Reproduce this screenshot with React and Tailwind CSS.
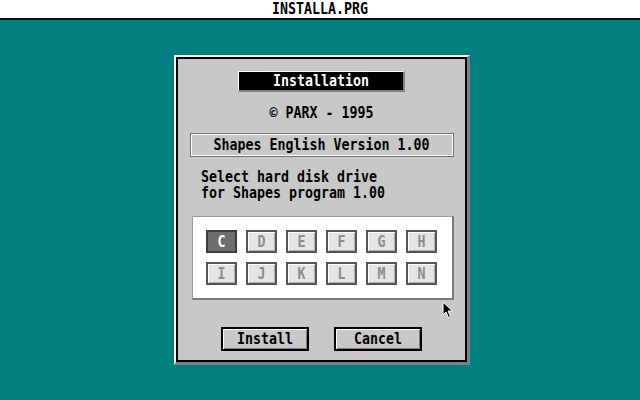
import React from 'react';

// GEM-style installer dialog on a teal desktop
const mono = { fontFamily: '"DejaVu Sans Mono", "Liberation Mono", monospace' };

const drives = [
  ['C', 'D', 'E', 'F', 'G', 'H'],
  ['I', 'J', 'K', 'L', 'M', 'N'],
];

const DriveButton = ({ letter, active }) => (
  <div
    className={
      active
        ? 'w-[31px] h-[23px] flex items-center justify-center border-2 border-[#3c3c3c] bg-[#6e6e6e] text-white'
        : 'w-[31px] h-[23px] flex items-center justify-center border-2 border-[#555] bg-[#e4e4e4] shadow-[inset_1px_1px_0_#fff,inset_-1px_-1px_0_#b0b0b0] text-[#8c8c8c]'
    }
  >
    <span className="text-[13.3px] leading-none font-bold scale-y-[1.2]">{letter}</span>
  </div>
);

const Button = ({ children }) => (
  <div className="w-[88px] h-[24px] flex items-center justify-center border-2 border-black bg-[#c8c8c8] shadow-[inset_1px_1px_0_#fff,inset_-1px_-1px_0_#808080]">
    <span className="text-[13.3px] leading-none font-bold text-black scale-y-[1.2]">{children}</span>
  </div>
);

const Cursor = () => (
  <svg className="absolute left-[442px] top-[301px]" width="12" height="18" viewBox="0 0 12 18">
    <path d="M1 1 L1 14 L4 11 L6.5 16.5 L8.5 15.5 L6 10 L10.5 10 Z" fill="#000" stroke="#fff" strokeWidth="1" />
  </svg>
);

export default function App() {
  return (
    <div className="relative w-[640px] h-[400px] flex flex-col bg-[#008080] overflow-hidden" style={mono}>
      {/* window title bar */}
      <div className="h-[20px] bg-white border-b-2 border-black flex items-center justify-center shrink-0">
        <span className="text-[13.3px] leading-none font-bold text-black scale-y-[1.2]">INSTALLA.PRG</span>
      </div>

      <div className="pl-[174px] pt-[35px]">
        <div className="w-[296px] h-[310px] border-t-2 border-l-2 border-white border-r-[3px] border-b-[3px] border-r-[#808080] border-b-[#808080]">
          <div className="w-full h-full border-2 border-black bg-[#c8c8c8] flex flex-col items-center">
            <div className="mt-[12px] w-[167px] h-[21px] bg-black border-t border-l border-white border-r-2 border-b-2 border-r-[#808080] border-b-[#808080] flex items-center justify-center">
              <span className="text-[13.3px] leading-none font-bold text-white scale-y-[1.2]">Installation</span>
            </div>

            <div className="mt-[13px] h-[16px] flex items-center text-[13.3px] font-bold text-black">
              <span className="scale-y-[1.2]">© PARX - 1995</span>
            </div>

            <div className="mt-[12px] w-[264px] h-[24px] border border-[#707070] shadow-[inset_1px_1px_0_#fff,inset_-1px_-1px_0_#fff] flex items-center justify-center">
              <span className="text-[13.3px] leading-none font-bold text-black scale-y-[1.2]">Shapes English Version 1.00</span>
            </div>

            <div className="mt-[12px] self-start pl-[23px] text-[13.3px] leading-[16px] font-bold text-black">
              <div className="scale-y-[1.2] origin-left">Select hard disk drive</div>
              <div className="scale-y-[1.2] origin-left">for Shapes program 1.00</div>
            </div>

            <div className="mt-[15px] self-start ml-[14px] w-[262px] h-[84px] bg-white border-t border-l border-[#9a9a9a] border-r-2 border-b-2 border-r-[#7a7a7a] border-b-[#7a7a7a] pt-[13px] pl-[13px] flex flex-col gap-[9px]">
              {drives.map((row, i) => (
                <div key={i} className="flex gap-[9px]">
                  {row.map((d) => (
                    <DriveButton key={d} letter={d} active={d === 'C'} />
                  ))}
                </div>
              ))}
            </div>

            <div className="mt-[27px] flex gap-[25px]">
              <Button>Install</Button>
              <Button>Cancel</Button>
            </div>
          </div>
        </div>
      </div>

      <Cursor />
    </div>
  );
}
